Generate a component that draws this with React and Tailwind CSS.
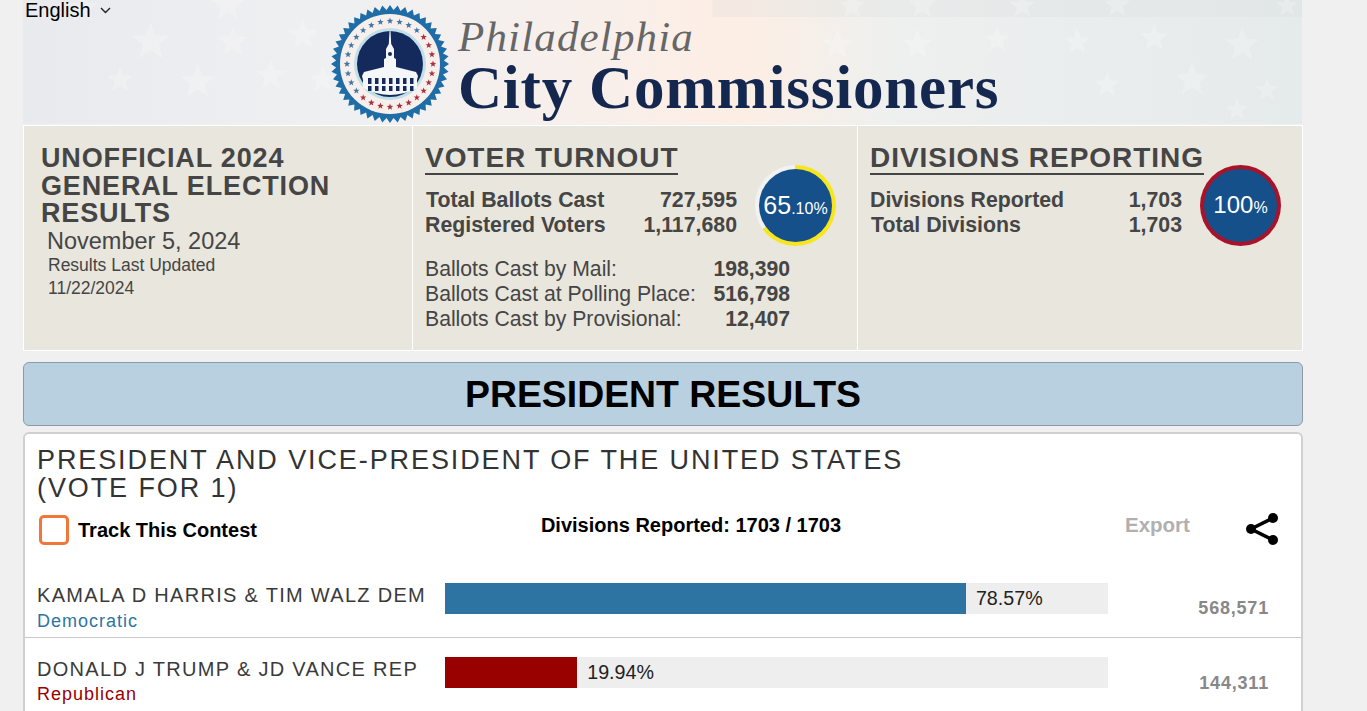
import React from 'react';

const sans = "font-['Liberation_Sans',Arial,sans-serif]";

const flagStars = [
  [60, 8, 16], [128, 42, 20], [205, 5, 17], [175, 82, 18], [97, 80, 14], [210, 42, 16], [280, 35, 16], [248, 76, 16],
  [300, 80, 14], [830, 6, 14], [900, 5, 15], [1000, 6, 14], [1095, 5, 14], [815, 45, 16], [895, 45, 16], [975, 40, 14],
  [1055, 42, 14], [1132, 38, 15], [1220, 45, 18], [1170, 80, 18], [1085, 85, 14], [1245, 90, 12], [1265, 6, 12], [1215, 110, 12],
];

function starPoints(cx, cy, r) {
  const pts = [];
  for (let i = 0; i < 10; i++) {
    const rad = i % 2 === 0 ? r : r * 0.42;
    const a = -Math.PI / 2 + (i * Math.PI) / 5;
    pts.push(`${(cx + rad * Math.cos(a)).toFixed(1)},${(cy + rad * Math.sin(a)).toFixed(1)}`);
  }
  return pts.join(' ');
}

function FlagStars() {
  return (
    <svg className="absolute inset-0 h-full w-full" viewBox="0 0 1280 124" preserveAspectRatio="none">
      <rect x="690" y="0" width="590" height="17" fill="#d8dcdd" opacity="0.25" />
      {flagStars.map(([x, y, r], i) => (
        <polygon key={i} points={starPoints(x, y, r)} fill="#ffffff" opacity="0.22" />
      ))}
    </svg>
  );
}

function Seal() {
  const teeth = [];
  for (let i = 0; i < 96; i++) {
    const a = (i * Math.PI) / 48;
    const r = i % 2 === 0 ? 59 : 54;
    teeth.push(`${(60 + r * Math.cos(a)).toFixed(1)},${(60 + r * Math.sin(a)).toFixed(1)}`);
  }
  const dots = [];
  for (let i = 0; i < 28; i++) {
    const a = (i * Math.PI) / 14;
    const x = 60 + 43 * Math.cos(a);
    const y = 60 + 43 * Math.sin(a);
    const red = a < Math.PI * 0.72 || a > Math.PI * 1.72;
    dots.push(<polygon key={i} points={starPoints(x, y, 3.4)} fill={red ? '#a8323f' : '#3f77a8'} />);
  }
  return (
    <svg width="118" height="118" viewBox="1 1 118 118" className="shrink-0">
      <polygon points={teeth.join(' ')} fill="#1f6da6" />
      <circle cx="60" cy="60" r="50" fill="#f6efec" />
      {dots}
      <circle cx="60" cy="60" r="36" fill="#bfe0ea" />
      <circle cx="60" cy="60" r="33" fill="#142a5c" />
      <path d="M59.500 27 L60.500 27 L61.200 40 L64 45 L64 54 L66 55 L66 63 L86 68 L88 72 L87 76 L87 84 Q60 98 33 84 L33 76 L32 72 L34 68 L54 63 L54 55 L56 54 L56 45 L58.800 40 Z" fill="#f4f6f8" />
      {[38, 45, 52, 59, 66, 73, 80].map((x) => (
        <g key={x} fill="#142a5c">
          <rect x={x} y="74" width="3.500" height="6" />
          <rect x={x} y="82" width="3.500" height="5" />
        </g>
      ))}
      <circle cx="60" cy="50" r="2" fill="#142a5c" />
    </svg>
  );
}

function Gauge({ ring, children }) {
  return (
    <div className={`flex h-[81px] w-[81px] shrink-0 items-center justify-center rounded-full ${ring}`}>
      <div className="flex h-[73px] w-[73px] items-baseline justify-center rounded-full bg-[#15508a] pt-[22px] text-white">
        {children}
      </div>
    </div>
  );
}

function StatRow({ label, value, className }) {
  return (
    <div className={`flex justify-between ${className}`}>
      <span>{label}</span>
      <span>{value}</span>
    </div>
  );
}

function Candidate({ name, nameGap, party, partyColor, partyGap, barColor, barGap, pct, pctLabel, votes, border }) {
  return (
    <div className={`flex h-[75px] ${border ? 'border-b border-[#c8c8c8]' : ''}`}>
      <div className={`w-[420px] shrink-0 pl-[12px] ${nameGap}`}>
        <div className="text-[20px] leading-[26px] tracking-[1.3px] text-[#3a3a3a]">{name}</div>
        <div className={`text-[18px] leading-[24px] tracking-[1px] ${partyGap} ${partyColor}`}>{party}</div>
      </div>
      <div className={`h-[31px] w-[663px] shrink-0 bg-[#eeeeee] ${barGap}`}>
        <div className="flex h-full items-center">
          <div className={`h-full ${barColor}`} style={{ width: `${pct}%` }} />
          <span className="ml-[10px] text-[19.700px] text-[#222]">{pctLabel}</span>
        </div>
      </div>
      <div className="flex-1 pr-[32px] pt-[34px] text-right text-[18px] font-bold leading-[22px] tracking-[0.8px] text-[#888888]">
        {votes}
      </div>
    </div>
  );
}

export default function App() {
  return (
    <div className={`h-[711px] overflow-hidden bg-[#f0f0f0] ${sans}`}>
      <div className="ml-[23px] w-[1280px]">
        <header className="relative flex h-[124px] w-[1279px] items-start overflow-hidden bg-[linear-gradient(90deg,#e9eaee_0%,#eff0f2_25%,#f9efea_46%,#fdeee4_56%,#eef0ef_68%,#e5eaeb_100%)] pl-[308px] pt-[5px]">
          <FlagStars />
          <div className="relative flex items-start gap-[9px]">
            <Seal />
            <div className="pt-[10px] font-['Liberation_Serif',serif]">
              <div className="text-[43px] italic leading-[44px] tracking-[1.15px] text-[#666666]">Philadelphia</div>
              <div className="mt-[3px] text-[61px] font-bold leading-[52px] tracking-[0.8px] text-[#14284f]">City Commissioners</div>
            </div>
          </div>
          <div className="absolute left-[2px] top-0 flex items-center gap-[9px] text-[20px] leading-[20px] text-black">
            English
            <svg width="11" height="7" viewBox="0 0 11 7" fill="none" stroke="#222" strokeWidth="1.4">
              <path d="M1 1 L5.500 5.500 L10 1" />
            </svg>
          </div>
        </header>

        <section className="mt-px flex h-[226px] border border-white bg-[#e9e6dd] text-[#454545]">
          <div className="w-[389px] shrink-0 border-r border-white pl-[17px] pt-[19px]">
            <h1 className="text-[27px] font-bold leading-[27.500px] tracking-[0.85px]">UNOFFICIAL 2024<br />GENERAL ELECTION<br />RESULTS</h1>
            <div className="ml-[6px] mt-0 text-[23.500px] leading-[27px]">November 5, 2024</div>
            <div className="ml-[7px] mt-[-1px] text-[17.500px] leading-[23px]">Results Last Updated<br />11/22/2024</div>
          </div>

          <div className="w-[445px] shrink-0 border-r border-white pl-[12px] pt-[17px]">
            <h2 className="w-fit border-b-2 border-[#454545] text-[28px] font-bold leading-[30px] tracking-[0.95px]">VOTER TURNOUT</h2>
            <div className="flex">
              <div className="mt-[13px] w-[312px] text-[21.300px] font-bold leading-[25px]">
                <StatRow label="Total Ballots Cast" value="727,595" className="pl-px" />
                <StatRow label="Registered Voters" value="1,117,680" />
              </div>
              <div className="ml-[18px] mt-[-10px]">
                <Gauge ring="bg-[conic-gradient(#f7e61e_0_65.100%,#f2f2f2_65.100%_100%)]">
                  <span className="text-[25px] leading-[28px]">65</span>
                  <span className="text-[16px] leading-[28px]">.10%</span>
                </Gauge>
              </div>
            </div>
            <div className="mt-[10px] w-[365px] text-[21.200px] leading-[25px]">
              <StatRow label="Ballots Cast by Mail:" value={<b>198,390</b>} />
              <StatRow label="Ballots Cast at Polling Place:" value={<b>516,798</b>} />
              <StatRow label="Ballots Cast by Provisional:" value={<b>12,407</b>} />
            </div>
          </div>

          <div className="flex-1 pl-[12px] pt-[17px]">
            <h2 className="w-fit border-b-2 border-[#454545] text-[28px] font-bold leading-[30px] tracking-[0.95px]">DIVISIONS REPORTING</h2>
            <div className="flex">
              <div className="mt-[13px] w-[312px] text-[21.300px] font-bold leading-[25px]">
                <StatRow label="Divisions Reported" value="1,703" />
                <StatRow label="Total Divisions" value="1,703" className="pl-px" />
              </div>
              <div className="ml-[18px] mt-[-10px]">
                <Gauge ring="bg-[#a8132a]">
                  <span className="text-[24px] leading-[28px]">100</span>
                  <span className="text-[16px] leading-[28px]">%</span>
                </Gauge>
              </div>
            </div>
          </div>
        </section>

        <div className="mt-[11px] flex h-[64px] items-center justify-center rounded-[6px] border border-[#8b9aa6] bg-[#b8d0e0] text-[37.400px] font-bold text-black">
          PRESIDENT RESULTS
        </div>

        <section className="mt-[6px] h-[300px] rounded-t-[6px] border-x-2 border-t-2 border-[#d0d0d0] bg-white">
          <h3 className="pl-[12px] pt-[12px] text-[27px] leading-[28px] tracking-[1.9px] text-[#333333]">
            PRESIDENT AND VICE-PRESIDENT OF THE UNITED STATES<br />(VOTE FOR 1)
          </h3>
          <div className="mt-[11px] flex h-[50px]">
            <div className="flex w-[501px] shrink-0 items-start pl-[14px]">
              <span className="mt-[2px] h-[30px] w-[30px] rounded-[5px] border-[3px] border-[#f0773a]" />
              <span className="ml-[9px] mt-[4px] text-[20px] font-bold leading-[26px] text-black">Track This Contest</span>
            </div>
            <div className="mt-[-1px] h-[26px] w-[330px] shrink-0 text-center text-[20px] font-bold leading-[26px] text-black">Divisions Reported: 1703 / 1703</div>
            <div className="ml-[269px] mt-[-1px] text-[20.500px] font-bold leading-[26px] text-[#b0b0b0]">Export</div>
            <svg className="ml-[53px] mt-[-1px]" width="38" height="34" viewBox="0 0 38 34" fill="none" stroke="#000" strokeWidth="3.500">
              <path d="M30 6 L8 17 L30 28" />
              <circle cx="8" cy="17" r="5" fill="#000" stroke="none" />
              <circle cx="30" cy="6" r="5" fill="#000" stroke="none" />
              <circle cx="30" cy="28" r="5" fill="#000" stroke="none" />
            </svg>
          </div>
          <Candidate
            name="KAMALA D HARRIS & TIM WALZ DEM"
            nameGap="pt-[19px]"
            party="Democratic"
            partyColor="text-[#2d74a3]"
            partyGap="mt-px"
            barColor="bg-[#2d74a3]"
            barGap="mt-[20px]"
            pct={78.57}
            pctLabel="78.57%"
            votes="568,571"
            border
          />
          <Candidate
            name="DONALD J TRUMP & JD VANCE REP"
            nameGap="pt-[18px]"
            party="Republican"
            partyColor="text-[#990000]"
            partyGap="mt-0"
            barColor="bg-[#990000]"
            barGap="mt-[19px]"
            pct={19.94}
            pctLabel="19.94%"
            votes="144,311"
          />
        </section>
      </div>
    </div>
  );
}
